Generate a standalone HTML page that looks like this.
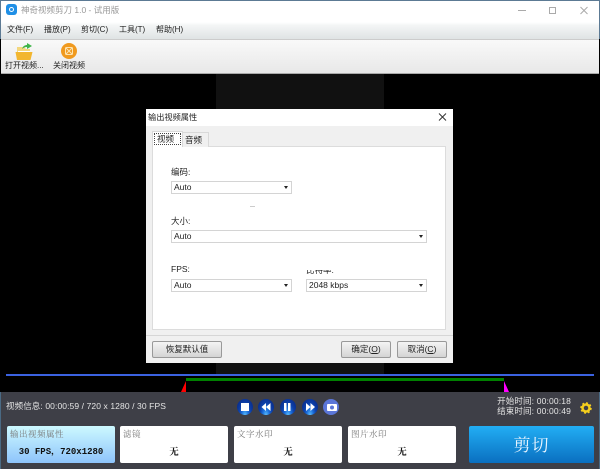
<!DOCTYPE html>
<html><head><meta charset="utf-8"><style>
*{box-sizing:border-box;margin:0;padding:0}
html,body{width:600px;height:469px;overflow:hidden;background:#000}
body{position:relative;font-family:"Liberation Sans","Noto Sans CJK SC",sans-serif;font-size:8px;color:#222}
.a{position:absolute;white-space:nowrap}
.sel{position:absolute;height:13px;background:#fff;border:1px solid #d4d4d4;font-size:8.5px;line-height:11px;padding-left:2px;color:#222}
.sel:after{content:"";position:absolute;right:3px;top:4px;border:2.5px solid transparent;border-top:3px solid #222;border-bottom:0}
.btn{position:absolute;top:341px;height:17px;background:linear-gradient(#f4f4f4,#d4d4d4);border:1px solid #999;border-radius:2px;text-align:center;line-height:15px;font-size:8.5px;color:#222}
.card{position:absolute;top:426px;height:37px;width:108px;background:#fff;border-radius:2px;font-family:"Noto Serif CJK SC",serif}
.card i{position:absolute;left:3px;top:2px;font-style:normal;font-size:8.500px;color:#777;letter-spacing:.5px}
.card b{position:absolute;left:0;right:0;top:18px;text-align:center;font-size:9.5px;color:#111}
.ball{position:absolute;top:399px;width:16px;height:16px;border-radius:50%;background:radial-gradient(ellipse at 50% 105%,#5fc4ff 0,#1c6fdc 30%,#0c3fa8 55%,#0a2f8e 80%,#2a55b8 100%)}
</style></head><body>
<div class="a" style="left:0;top:0;width:600px;height:39px;background:linear-gradient(#fff 0,#fff 21px,#f4f6f6 24px,#dfe3e4 38px);border:1px solid #5c7a94;border-bottom:0"></div>
<div class="a" style="left:6px;top:4px;width:11px;height:11px;border-radius:3px;background:#1f8fe6"></div>
<div class="a" style="left:9px;top:7px;width:5px;height:5px;border-radius:50%;border:1px solid #fff"></div>
<div class="a" style="left:21px;top:4px;font-size:8.500px;line-height:12px;color:#999">神奇视频剪刀 1.0 - 试用版</div>
<svg class="a" style="left:0;top:0" width="600" height="22"><path d="M518 10.500H526" stroke="#aaa"/><rect x="549.500" y="7.500" width="6" height="6" fill="none" stroke="#aaa"/><path d="M580.500 7l7 7M587.500 7l-7 7" stroke="#aaa"/></svg>
<div class="a" style="left:7px;top:24px;line-height:12px">文件(F)</div>
<div class="a" style="left:44px;top:24px;line-height:12px">播放(P)</div>
<div class="a" style="left:81px;top:24px;line-height:12px">剪切(C)</div>
<div class="a" style="left:119px;top:24px;line-height:12px">工具(T)</div>
<div class="a" style="left:156px;top:24px;line-height:12px">帮助(H)</div>
<div class="a" style="left:1px;top:39px;width:598px;height:35px;background:linear-gradient(#f9f9f9,#e8e8e8);border-top:1px solid #ccc;border-bottom:1px solid #aaa"></div>
<svg class="a" style="left:14px;top:42px" width="20" height="18"><path d="M3 5h7l2 2h4v3H3z" fill="#f3d77e"/><path d="M4 9h12v2H4z" fill="#fff"/><path d="M1.500 10h17l-2 8H3z" fill="#f2b62f"/><path d="M8 7c1-3 3-4 5-4V1l5 3-5 3V5c-2 0-4 1-5 2z" fill="#3fb54a"/></svg>
<div class="a" style="left:61px;top:43px;width:16px;height:16px;border-radius:50%;background:#f09a1f"></div>
<svg class="a" style="left:61px;top:43px" width="16" height="16"><rect x="4.500" y="4.500" width="7" height="7" rx="1" fill="none" stroke="#fde3b0"/><path d="M5 5l6 6M11 5l-6 6" stroke="#fde3b0"/></svg>
<div class="a" style="left:5px;top:60px;line-height:12px">打开视频...</div>
<div class="a" style="left:53px;top:60px;line-height:12px">关闭视频</div>
<div class="a" style="left:216px;top:74px;width:168px;height:300px;background:#111"></div>
<div class="a" style="left:146px;top:109px;width:307px;height:254px;background:#f0f0f0"></div>
<div class="a" style="left:146px;top:109px;width:307px;height:17px;background:#fff"></div>
<div class="a" style="left:148px;top:111px;font-size:8.200px;line-height:13px;color:#222">输出视频属性</div>
<svg class="a" style="left:438px;top:112px" width="10" height="10"><path d="M1 1.500l7 7M8 1.500l-7 7" stroke="#333" fill="none"/></svg>
<div class="a" style="left:152px;top:146px;width:294px;height:184px;background:#fff;border:1px solid #dcdcdc"></div>
<div class="a" style="left:182px;top:132px;width:27px;height:15px;background:#f0f0f0;border:1px solid #d9d9d9;border-bottom:0"></div>
<div class="a" style="left:152px;top:131px;width:31px;height:16px;background:#fff;border:1px solid #d9d9d9;border-bottom:0"></div>
<div class="a" style="left:154px;top:133px;width:27px;height:12px;border:1px dotted #444"></div>
<div class="a" style="left:157px;top:133px;font-size:8.500px;line-height:12px;color:#222">视频</div>
<div class="a" style="left:185px;top:134px;font-size:8.500px;line-height:12px;color:#222">音频</div>
<div class="a" style="left:171px;top:166px;font-size:8.500px;line-height:13px;color:#222">编码:</div>
<div class="sel" style="left:171px;top:181px;width:121px">Auto</div>
<div class="a" style="left:250px;top:206px;width:5px;height:1px;background:#ccc"></div>
<div class="a" style="left:171px;top:215px;font-size:8.500px;line-height:13px;color:#222">大小:</div>
<div class="sel" style="left:171px;top:230px;width:256px">Auto</div>
<div class="a" style="left:171px;top:263px;font-size:8.500px;line-height:13px;color:#222">FPS:</div>
<div class="sel" style="left:171px;top:279px;width:121px">Auto</div>
<div class="a" style="left:306px;top:270px;width:60px;height:5px;overflow:hidden"><div style="margin-top:-6px;font-size:8.500px;line-height:13px;color:#222">比特率:</div></div>
<div class="sel" style="left:306px;top:279px;width:121px">2048 kbps</div>
<div class="a" style="left:146px;top:335px;width:307px;height:1px;background:#d6d6d6"></div>
<div class="btn" style="left:152px;width:70px">恢复默认值</div>
<div class="btn" style="left:341px;width:50px">确定(<u>O</u>)</div>
<div class="btn" style="left:397px;width:50px">取消(<u>C</u>)</div>
<div class="a" style="left:6px;top:374px;width:588px;height:1.500px;background:#3b62e0"></div>
<div class="a" style="left:186px;top:378px;width:318px;height:3px;background:#008000"></div>
<svg class="a" style="left:180px;top:381px" width="330" height="11"><path d="M1 11L6 0v11z" fill="#f00"/><path d="M324 0v11h5z" fill="#f0f"/></svg>
<div class="a" style="left:0;top:392px;width:600px;height:77px;background:#3e3f47;border-left:1px solid #4a6a84;border-right:1px solid #4a6a84"></div>
<div class="a" style="left:6px;top:400px;font-size:8.500px;line-height:12px;letter-spacing:.1px;color:#e4e4e4">视频信息: 00:00:59 / 720 x 1280 / 30 FPS</div>
<div class="ball" style="left:237px"></div>
<div class="ball" style="left:258px"></div>
<div class="ball" style="left:280px"></div>
<div class="ball" style="left:302px"></div>
<div class="a" style="left:323px;top:399px;width:16px;height:16px;border-radius:50%;background:#5b76d8"></div>
<svg class="a" style="left:237px;top:399px" width="103" height="16"><rect x="4" y="4" width="8" height="8" fill="#fff"/><path d="M29 4v8l-4.500-4zM33.500 4v8l-4.500-4z" fill="#fff"/><rect x="47" y="4" width="2.500" height="8" fill="#fff"/><rect x="51" y="4" width="2.500" height="8" fill="#fff"/><path d="M69 4v8l4.500-4zM73.500 4v8l4.500-4z" fill="#fff"/><rect x="90" y="5" width="10" height="7" rx="1" fill="#fff"/><circle cx="95" cy="8.500" r="2" fill="#5b76d8"/></svg>
<div class="a" style="left:490px;top:396px;width:81px;text-align:right;font-size:8.500px;line-height:10px;letter-spacing:.15px;color:#e4e4e4">开始时间: 00:00:18<br>结束时间: 00:00:49</div>
<svg class="a" style="left:580px;top:402px" width="12" height="12"><circle cx="6" cy="6" r="3.500" fill="none" stroke="#f5cf1d" stroke-width="2.500"/><circle cx="6" cy="6" r="5" fill="none" stroke="#f5cf1d" stroke-width="1.500" stroke-dasharray="2 1.900"/></svg>
<div class="card" style="left:7px;background:linear-gradient(#cdf9ff,#8ec4fb)"><i>输出视频属性</i><b style="font-family:'Liberation Mono','Noto Serif CJK SC',monospace;font-weight:bold;font-size:9px">30 FPS，720x1280</b></div>
<div class="card" style="left:120px"><i>滤镜</i><b>无</b></div>
<div class="card" style="left:234px"><i>文字水印</i><b>无</b></div>
<div class="card" style="left:348px"><i>图片水印</i><b>无</b></div>
<div class="a" style="left:469px;top:426px;width:125px;height:37px;background:linear-gradient(#22aef4,#0a6fc0);border-radius:2px;text-align:center;font:17px/35px 'Noto Serif CJK SC',serif;color:#e8f4ff;letter-spacing:1px">剪切</div>
</body></html>
